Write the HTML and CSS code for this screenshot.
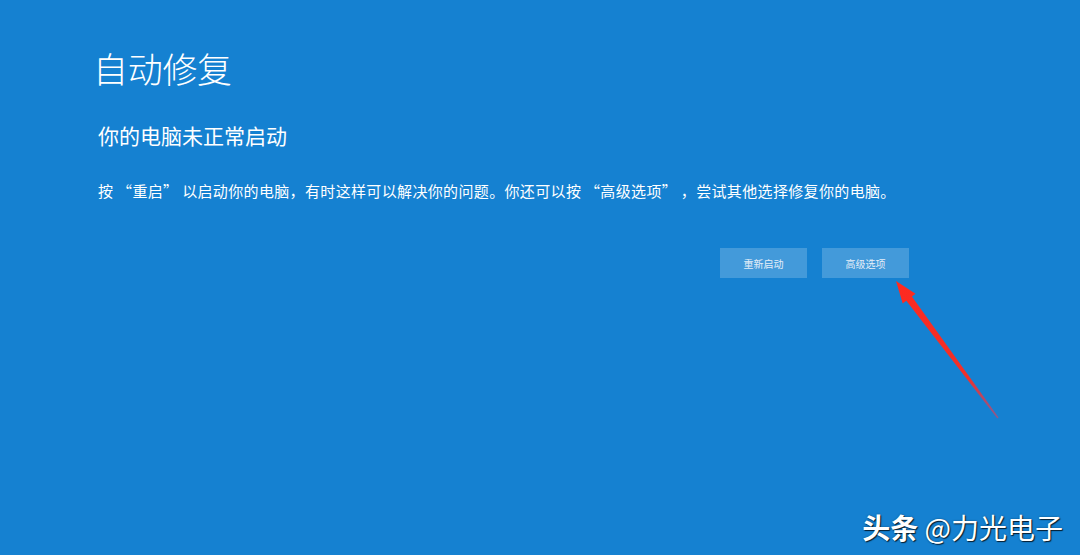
FILE: index.html
```html
<!DOCTYPE html>
<html lang="zh-CN">
<head>
<meta charset="utf-8">
<title>自动修复</title>
<link rel="stylesheet" href="styles.css">
</head>
<body>
<main class="repair">
  <h1 class="repair-title">自动修复</h1>
  <h2 class="repair-subtitle">你的电脑未正常启动</h2>
  <p class="repair-text">按 “重启” 以启动你的电脑，有时这样可以解决你的问题。你还可以按 “高级选项” ，尝试其他选择修复你的电脑。</p>
  <div class="repair-actions">
    <button class="repair-btn" type="button">重新启动</button>
    <button class="repair-btn" type="button">高级选项</button>
  </div>
</main>

<!-- red pointer drawn over the page -->
<svg class="pointer" width="1080" height="555" viewBox="0 0 1080 555" aria-hidden="true">
  <defs>
    <linearGradient id="pointerFade" x1="896" y1="281" x2="998" y2="418" gradientUnits="userSpaceOnUse">
      <stop offset="0" stop-color="#ff2a1f"/>
      <stop offset="0.7" stop-color="#f0302a"/>
      <stop offset="1" stop-color="#d84060" stop-opacity="0.6"/>
    </linearGradient>
  </defs>
  <polygon fill="url(#pointerFade)" points="896,281 915.5,293.8 911.9,296.5 998.6,417.6 997.4,418.4 906.3,300.7 902.7,303.4"/>
</svg>

<div class="credit"><b>头条</b> @力光电子</div>
</body>
</html>
```

FILE: styles.css
```css
html, body {
  margin: 0;
  height: 100%;
}

body {
  background: #1581d1;
  color: #ffffff;
  font-family: "Noto Sans CJK SC", "Noto Sans", sans-serif;
  overflow: hidden;
  position: relative;
}

.repair {
  padding: 48px 0 0 93px;
}

.repair-title {
  margin: 0;
  font-size: 35px;
  line-height: 40px;
  font-weight: 300;
  letter-spacing: -0.3px;
}

.repair-subtitle {
  margin: 33px 0 0 5px;
  font-size: 21px;
  line-height: 28px;
  font-weight: 400;
}

.repair-text {
  margin: 31px 0 0 5px;
  font-size: 15px;
  line-height: 22px;
  letter-spacing: 0.35px;
}

.repair-actions {
  display: flex;
  justify-content: flex-end;
  gap: 15px;
  margin-top: 46px;
  padding-right: 171px;
}

.repair-btn {
  width: 87px;
  height: 30px;
  border: 0;
  padding: 0;
  background: rgba(255, 255, 255, 0.2);
  color: #e4eef8;
  font-family: inherit;
  font-size: 10px;
}

.pointer {
  position: absolute;
  left: 0;
  top: 0;
}

.credit {
  position: absolute;
  right: 17px;
  bottom: 10px;
  font-size: 28px;
  line-height: 36px;
  color: #ffffff;
  text-shadow: 1px 1px 1px rgba(0, 0, 0, 0.75), 0 0 2px rgba(0, 0, 0, 0.4);
}

.credit b {
  font-weight: 700;
}
```
